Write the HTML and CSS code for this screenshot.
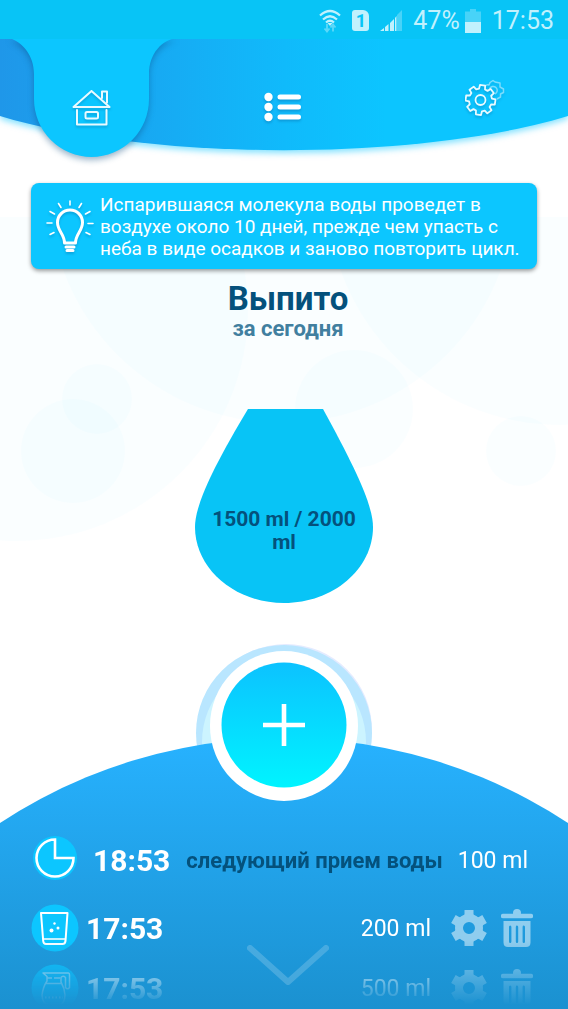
FILE: index.html
```html
<!DOCTYPE html>
<html lang="ru">
<head>
<meta charset="utf-8">
<meta name="viewport" content="width=device-width, initial-scale=1">
<title>Выпито за сегодня</title>
<link rel="stylesheet" href="styles.css">
</head>
<body>
<svg class="defs" aria-hidden="true">
  <defs>
    <path id="cog-outline" d="M-3-11.1-2.6-14.8H2.6L3-11.1 5.7-10 8.6-12.3 12.3-8.6 10-5.7 11.1-3 14.8-2.6V2.6L11.1 3 10 5.7 12.3 8.6 8.6 12.3 5.7 10 3 11.1 2.6 14.8H-2.6L-3 11.1-5.7 10-8.6 12.3-12.3 8.6-10 5.7-11.1 3-14.8 2.6V-2.6L-11.1-3-10-5.7-12.3-8.6-8.6-12.3-5.7-10Z"/>
    <path id="tooth" d="M-5.5-10.5-4.5-14V-18H4.5V-14L5.5-10.5Z"/>
    <g id="cog">
      <circle r="10" fill="none" stroke="#fff" stroke-width="8"/>
      <use href="#tooth"/><use href="#tooth" transform="rotate(60)"/><use href="#tooth" transform="rotate(120)"/>
      <use href="#tooth" transform="rotate(180)"/><use href="#tooth" transform="rotate(240)"/><use href="#tooth" transform="rotate(300)"/>
    </g>
    <g id="bin">
      <path d="M2 7H30" stroke="#fff" stroke-width="4.4" stroke-linecap="round"/>
      <circle cx="16" cy="4" r="4"/>
      <path fill-rule="evenodd" d="M2.500 12H29.500V33.500Q29.500 38 25 38H7Q2.500 38 2.500 33.500ZM8 18V32.500Q8 34 9.200 34T10.400 32.500V18Q10.400 16.500 9.200 16.500T8 18ZM14.800 18V32.500Q14.800 34 16 34T17.200 32.500V18Q17.200 16.500 16 16.500T14.800 18ZM21.600 18V32.500Q21.600 34 22.800 34T24 32.500V18Q24 16.500 22.800 16.500T21.600 18Z"/>
    </g>
  </defs>
</svg>
<div class="app">
  <div class="status">
    <svg width="22" height="24" viewBox="0 0 22 24" fill="none" stroke="currentColor" stroke-width="2.200" aria-hidden="true">
      <path d="M1 6.500Q11-2.500 21 6.500M4 10.500Q11 4 18 10.500M7 13.500Q11 10 15 13.500"/>
      <path d="M8.500 14H13.500L11 17Z" fill="currentColor" stroke="none"/>
      <path d="M8 15V22M5.500 19.500 8 22.500 10.500 19.500M14 22.500V16M11.500 18.500 14 15.500 16.500 18.500" opacity=".45" stroke-width="1.800"/>
    </svg>
    <span class="sim">1</span>
    <svg width="22" height="24" viewBox="0 0 22 24" fill="currentColor" aria-hidden="true">
      <path d="M0 22 4 19V22ZM5 18 8.500 15V22H5ZM10 14 14 10V22H10ZM15 9 16.500 7V22H15Z"/>
      <path d="M17 6 22 1V22H17Z" opacity=".35"/>
    </svg>
    <span class="charge">47%</span>
    <svg class="battery" width="16" height="24" viewBox="0 0 16 24" fill="currentColor" aria-hidden="true">
      <path d="M0 2.500H5V0H11V2.500H16V13H0Z" opacity=".35"/><path d="M0 13H16V24H0Z"/>
    </svg>
    <time>17:53</time>
  </div>

  <header class="header">
    <svg class="wave" viewBox="0 39 568 130" preserveAspectRatio="none" aria-hidden="true">
      <defs>
        <linearGradient id="sky"><stop offset="0" stop-color="#1f97e9"/><stop offset=".28" stop-color="#17aaf3"/><stop offset=".5" stop-color="#10bafb"/><stop offset=".68" stop-color="#0cc5ff"/></linearGradient>
      </defs>
      <path class="wave-fill" fill="url(#sky)" d="M0 30H568V116C418 161.500 150 161.500 0 116Z"/>
    </svg>
    <nav class="nav">
      <a class="tab" href="#home" aria-label="Главная">
        <svg class="tab-art" width="184" height="130" viewBox="0 39 184 130" fill="none" aria-hidden="true">
          <path class="tab-shape" d="M9 38H178C162 39 149 54 149 74V99A57.500 58 0 0 1 34 99V74C34 56 23 42 9 38Z" fill="#0cc6ff"/>
          <g class="glyph" stroke="#e9faff" stroke-width="2" stroke-linejoin="round" stroke-linecap="round">
            <path d="M73.500 107 91.500 91 109.500 107ZM102 98V91.500H107V102.500M77 110V124.500H106.500V110"/>
            <rect x="85.500" y="112" width="12.500" height="6.500" rx="1.500"/>
          </g>
        </svg>
      </a>
      <a class="item" href="#history" aria-label="История">
        <svg class="glyph" width="38" height="30" viewBox="0 0 38 30" fill="#fff" stroke="#fff" aria-hidden="true">
          <g stroke="none"><circle cx="4.500" cy="5" r="4.200"/><circle cx="4.500" cy="15" r="4.200"/><circle cx="4.500" cy="25" r="4.200"/></g>
          <path d="M16 5H34.500M16 15H34.500M16 25H34.500" stroke-width="5" stroke-linecap="round"/>
        </svg>
      </a>
      <a class="item item-end" href="#settings" aria-label="Настройки">
        <svg class="glyph" width="40" height="38" viewBox="0 0 40 38" fill="none" stroke="#e9faff" stroke-linejoin="round" aria-hidden="true">
          <g opacity=".5"><path d="M20 7Q22 5 24 6L25 3.500 28 1.500 30 3 32.500 3.500 35 4V8L38.500 10V13.500L35.500 15V18L32 20" stroke-width="1.500"/><path d="M24.500 10A4 4 0 1 1 30 15" stroke-width="1.500"/></g>
          <use href="#cog-outline" transform="translate(15.500 21) rotate(8)" stroke-width="1.800"/>
          <circle cx="15.500" cy="21" r="5" stroke-width="1.800"/>
        </svg>
      </a>
    </nav>
  </header>

  <main class="main">
    <svg class="bubbles" viewBox="0 217 568 330" preserveAspectRatio="xMidYMin slice" fill="#00c8ee" aria-hidden="true">
      <g fill-opacity=".018">
        <circle cx="17" cy="310" r="231"/><circle cx="282" cy="190" r="233"/><circle cx="560" cy="192" r="233"/>
        <circle cx="354" cy="409" r="59"/><circle cx="97" cy="399" r="35"/><circle cx="73" cy="451" r="52"/><circle cx="521" cy="451" r="35"/>
      </g>
    </svg>
    <section class="tip">
      <svg class="glyph" width="48" height="56" viewBox="0 0 48 56" fill="none" stroke="#fff" stroke-linecap="round" aria-hidden="true">
        <path d="M18.500 44C18.500 35 11.500 32 11.500 23.500A12.500 12.500 0 0 1 36.500 23.500C36.500 32 29.500 35 29.500 44Z" stroke-width="3" stroke-linejoin="round"/>
        <path d="M20 48H28M21 51.500H27" stroke-width="3"/>
        <path d="M24 2V6M12.500 4.500 15 8.500M35.500 4.500 33 8.500M4 12.500 8.500 15M44 12.500 39.500 15M1 24H6M42 24.500H47M4 35.500 8 33.500M44 35.500 40 33.500" stroke-width="1.600"/>
      </svg>
      <p>Испарившаяся молекула воды проведет в воздухе около 10 дней, прежде чем упасть с неба в виде осадков и заново повторить цикл.</p>
    </section>
    <h1>Выпито</h1>
    <h2>за сегодня</h2>
    <div class="drop">
      <svg viewBox="0 0 178 194" aria-hidden="true"><path fill="#08c4f6" d="M53 0H128C158 55 178 95 178 118C178 160 138 194 89 194S0 160 0 118C0 95 20 55 53 0Z"/></svg>
      <p>1500 ml / 2000 ml</p>
    </div>
  </main>

  <section class="panel">
    <svg class="halo" width="178" height="180" viewBox="0 0 178 180" aria-hidden="true">
      <circle cx="91" cy="86" r="86" fill="#e4ebff"/><circle cx="89" cy="89" r="88" fill="#b9e6ff"/><circle cx="89" cy="98" r="82" fill="#ccf4ff"/>
    </svg>
    <div class="hill"></div>
    <button class="add" type="button" aria-label="Добавить">
      <svg viewBox="0 0 148 150" aria-hidden="true">
        <defs><linearGradient id="aqua" x2="0" y2="1"><stop stop-color="#0cc2ff"/><stop offset="1" stop-color="#00f4ff"/></linearGradient></defs>
        <ellipse cx="74" cy="75" rx="74" ry="75" fill="#fff"/>
        <circle cx="74" cy="74" r="62.500" fill="url(#aqua)"/>
        <path d="M74 53V95M53 74H95" stroke="#fff" stroke-width="4.600"/>
      </svg>
    </button>
    <ul class="log">
      <li class="row row-next">
        <svg class="badge" width="48" height="48" viewBox="0 0 48 48" fill="none" aria-hidden="true">
          <circle cx="24" cy="22" r="22" fill="#0cc6ff"/>
          <path d="M24 3.500A18.500 18.500 0 1 0 42.500 22H24Z" stroke="#fff" stroke-width="2.600"/>
        </svg>
        <time>18:53</time>
        <strong>следующий прием воды</strong>
        <span class="volume">100 ml</span>
      </li>
      <li class="row">
        <svg class="badge" width="48" height="48" viewBox="0 0 48 48" fill="none" stroke="#fff" stroke-linejoin="round" aria-hidden="true">
          <circle cx="24" cy="24" r="23.500" fill="#0cc6ff" stroke="none"/>
          <path d="M10 9H36.500L34.500 37Q34 40 31.500 40H15Q12.500 40 12.200 37Z" stroke-width="2"/><path d="M12 35H34" stroke-width="1.500"/>
          <g fill="#fff" stroke="none"><circle cx="20.500" cy="26.500" r="2"/><circle cx="27" cy="24" r="1.500"/><circle cx="23.500" cy="19.500" r="1.200"/></g>
        </svg>
        <time>17:53</time>
        <span class="volume">200 ml</span>
        <button type="button" aria-label="Изменить"><svg width="36" height="38" viewBox="-18 -19 36 38" fill="#fff"><use href="#cog"/></svg></button>
        <button type="button" aria-label="Удалить"><svg width="32" height="38" viewBox="0 0 32 38" fill="#fff"><use href="#bin"/></svg></button>
      </li>
      <li class="row">
        <svg class="badge" width="48" height="48" viewBox="0 0 48 48" fill="none" stroke="#fff" stroke-opacity=".7" stroke-linejoin="round" aria-hidden="true">
          <circle cx="24" cy="24" r="23.500" fill="#0cc6ff" stroke="none"/>
          <path d="M12 9H37.500Q38.500 9 38.500 11V23.500Q36.500 26 34.500 23.500V13.500Q32 11 30 13.500V18Q33.500 24 34 31Q33.500 40 29 40.500H17Q11.500 40 11 31Q12 23 16 17V12.500ZM16 14H21M23 14H29M15 19.500H30" stroke-width="1.500"/>
          <path d="M14 33.500H32" stroke-width="2" stroke-dasharray="1.500 2"/>
        </svg>
        <time>17:53</time>
        <span class="volume">500 ml</span>
        <button type="button" aria-label="Изменить"><svg width="36" height="38" viewBox="-18 -19 36 38" fill="#fff"><use href="#cog"/></svg></button>
        <button type="button" aria-label="Удалить"><svg width="32" height="38" viewBox="0 0 32 38" fill="#fff"><use href="#bin"/></svg></button>
      </li>
    </ul>
    <svg class="more" width="84" height="44" viewBox="0 0 84 44" fill="none" stroke="#fff" stroke-width="6" stroke-linecap="round" stroke-linejoin="round" aria-hidden="true"><path d="M4 4 42 38 80 4"/></svg>
  </section>
</div>
</body>
</html>
```

FILE: styles.css
```css
* {
  box-sizing: border-box;
}

body {
  margin: 0;
  background: #fff;
  color: #fff;
  font-family: Roboto, "Noto Sans", sans-serif;
}

h1, h2, p, ul {
  margin: 0;
  padding: 0;
}

svg {
  display: block;
  flex: none;
}

button {
  padding: 0;
  border: 0;
  background: none;
  cursor: pointer;
}

.defs {
  position: absolute;
  width: 0;
  height: 0;
}

.app {
  display: flex;
  flex-direction: column;
  height: 100vh;
  overflow: hidden;
}

.status {
  position: relative;
  z-index: 2;
  display: flex;
  align-items: center;
  justify-content: flex-end;
  gap: 11px;
  height: 39px;
  padding: 2px 14px 0 0;
  background: #08c4f6;
  color: #c1f1fd;
  font-size: 25px;
  line-height: 37px;
}

.sim {
  width: 17px;
  height: 21px;
  border-radius: 3px 6px 3px 3px;
  background: #c1f1fd;
  color: #08c4f6;
  font-size: 18px;
  font-weight: 700;
  line-height: 22px;
  text-align: center;
}

.battery {
  margin-left: -6px;
}

.header {
  position: relative;
  z-index: 1;
  height: 111px;
}

.wave {
  position: absolute;
  top: 0;
  left: 0;
  width: 100%;
  height: 130px;
}

.wave-fill {
  filter: drop-shadow(0 3px 3px #0cc5ff80);
}

.nav {
  position: relative;
  display: grid;
  grid-template-columns: 183fr 198fr 187fr;
}

.tab-art {
  margin: 0 auto;
}

.tab-shape {
  filter: drop-shadow(0 3px 3px #04457a66);
}

.item {
  display: flex;
  justify-content: center;
  align-items: flex-start;
  padding-top: 53px;
}

.item-end {
  padding-top: 40px;
  padding-left: 20px;
}

.glyph {
  filter: drop-shadow(0 2px 1px #04457a40);
}

.main {
  position: relative;
  display: flex;
  flex-direction: column;
  align-items: center;
  padding: 33px 31px 48px;
}

.bubbles {
  position: absolute;
  top: 67px;
  left: 0;
  width: 100%;
  height: 330px;
}

.tip {
  position: relative;
  display: flex;
  align-items: center;
  gap: 6px;
  width: 100%;
  padding: 11px 12px 9px 15px;
  border-radius: 8px;
  background: #0cc6ff;
  box-shadow: 0 2px 4px #0006;
  font-size: 19px;
  line-height: 22px;
}

h1 {
  position: relative;
  margin-top: 12px;
  padding-left: 8px;
  color: #04517c;
  font-size: 33px;
  line-height: 36px;
}

h2 {
  position: relative;
  padding-left: 8px;
  color: #417f9f;
  font-size: 22px;
  line-height: 24px;
}

.drop {
  position: relative;
  display: grid;
  justify-items: center;
  margin-top: 68px;
}

.drop svg,
.drop p {
  grid-area: 1 / 1;
}

.drop svg {
  width: 178px;
}

.drop p {
  width: 150px;
  padding-top: 99px;
  color: #04517c;
  font-size: 21px;
  font-weight: 700;
  line-height: 23px;
  text-align: center;
}

.panel {
  position: relative;
  display: flex;
  flex: 1;
  flex-direction: column;
  align-items: center;
  min-height: 0;
}

.halo {
  position: absolute;
  top: -7px;
  left: calc(50% - 89px);
}

.hill {
  position: absolute;
  inset: 87px 0 0;
  background: linear-gradient(#27b2ff, #1b91d0);
  clip-path: ellipse(91vw 517px at 50% 517px);
}

.add {
  position: relative;
  width: 148px;
  border-radius: 50%;
}

.log {
  position: relative;
  flex: 1;
  width: 100%;
  min-height: 0;
  padding: 29px 35px 0 31px;
  overflow: hidden;
  list-style: none;
  mask-image: linear-gradient(to top, transparent 4px, #000 68px);
}

.row {
  display: flex;
  align-items: center;
  height: 60px;
}

.row time {
  margin-left: 7px;
  font-size: 30px;
  font-weight: 700;
}

.row-next {
  margin-bottom: 8px;
}

.row-next time {
  margin-left: 14px;
}

.row strong {
  margin-left: 16px;
  color: #04517c;
  font-size: 22px;
}

.volume {
  margin-left: auto;
  font-size: 23px;
}

.row-next .volume {
  padding-right: 5px;
}

.row button {
  margin-left: 14px;
  opacity: .5;
}

.volume + button {
  margin-left: 20px;
}

.more {
  position: absolute;
  bottom: 21px;
  left: calc(50% - 38px);
  opacity: .18;
}
```
